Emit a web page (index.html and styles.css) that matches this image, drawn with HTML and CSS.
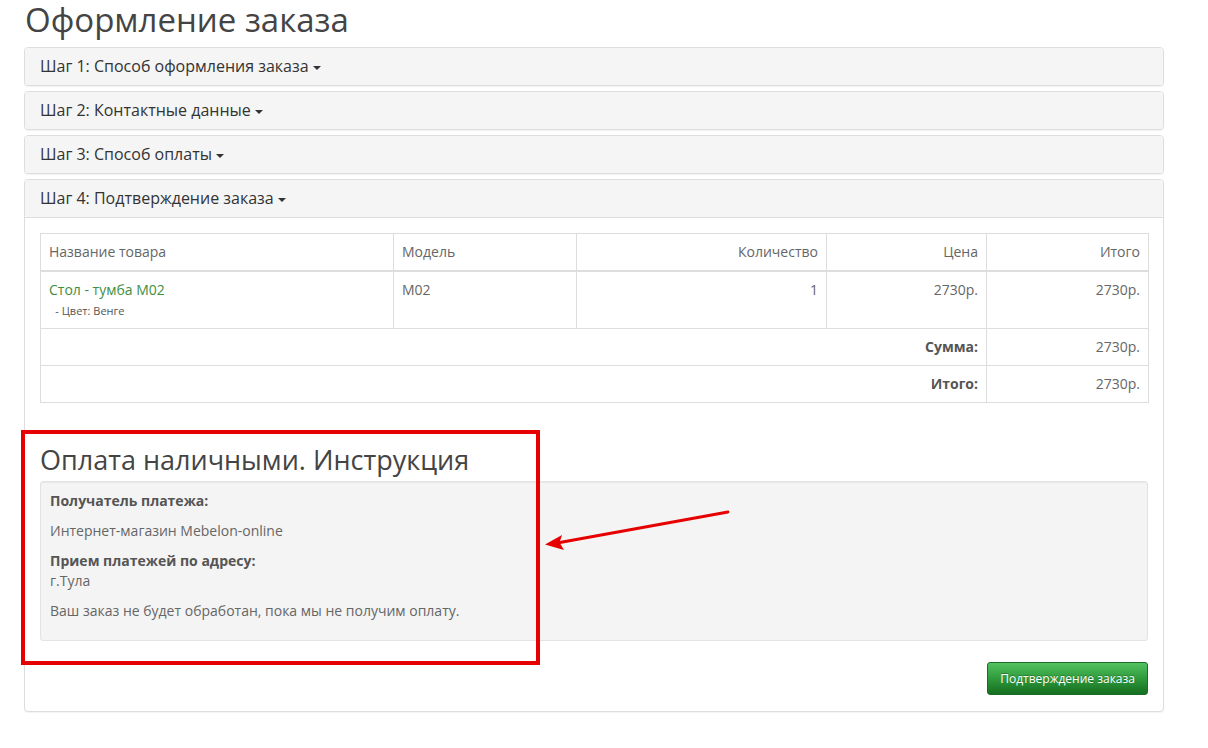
FILE: index.html
```html
<!DOCTYPE html>
<html lang="ru">
<head>
<meta charset="utf-8">
<title>Оформление заказа</title>
<link rel="stylesheet" href="styles.css">
</head>
<body>
<div class="page">
  <h1 class="page-title">Оформление заказа</h1>
  <div class="panel-group">
    <div class="panel">
      <div class="panel-heading">Шаг 1: Способ оформления заказа <span class="caret"></span></div>
    </div>
    <div class="panel">
      <div class="panel-heading">Шаг 2: Контактные данные <span class="caret"></span></div>
    </div>
    <div class="panel">
      <div class="panel-heading">Шаг 3: Способ оплаты <span class="caret"></span></div>
    </div>
    <div class="panel">
      <div class="panel-heading">Шаг 4: Подтверждение заказа <span class="caret"></span></div>
      <div class="panel-body">
        <table class="cart">
          <colgroup>
            <col class="c1"><col class="c2"><col class="c3"><col class="c4"><col class="c5">
          </colgroup>
          <thead>
            <tr>
              <td>Название товара</td>
              <td>Модель</td>
              <td class="r">Количество</td>
              <td class="r">Цена</td>
              <td class="r">Итого</td>
            </tr>
          </thead>
          <tbody>
            <tr class="item">
              <td><a class="prod" href="#">Стол - тумба М02</a><br>&nbsp;<small class="opt"> &nbsp;- Цвет: Венге</small></td>
              <td>М02</td>
              <td class="r">1</td>
              <td class="r">2730р.</td>
              <td class="r">2730р.</td>
            </tr>
          </tbody>
          <tfoot>
            <tr>
              <td colspan="4" class="r"><strong>Сумма:</strong></td>
              <td class="r">2730р.</td>
            </tr>
            <tr>
              <td colspan="4" class="r"><strong>Итого:</strong></td>
              <td class="r">2730р.</td>
            </tr>
          </tfoot>
        </table>
        <h2 class="pay-title">Оплата наличными. Инструкция</h2>
        <div class="well">
          <p><b>Получатель платежа:</b></p>
          <p>Интернет-магазин Mebelon-online</p>
          <p><b>Прием платежей по адресу:</b><br>г.Тула</p>
          <p>Ваш заказ не будет обработан, пока мы не получим оплату.</p>
        </div>
        <div class="buttons">
          <button class="btn-confirm" type="button">Подтверждение заказа</button>
        </div>
      </div>
    </div>
  </div>
</div>
<div class="highlight"></div>
<svg class="arrow" width="200" height="50" viewBox="0 0 200 50" aria-hidden="true">
  <path d="M185 5 L14 36" stroke="#e60000" stroke-width="2.8" fill="none" stroke-linecap="round"/>
  <path d="M2 37.5 L19 28 L16.5 35.5 L21 43 Z" fill="#e60000"/>
</svg>
</body>
</html>
```

FILE: styles.css
```css
* { box-sizing: border-box; }
html, body { margin: 0; padding: 0; background: #fff; }
body {
  font-family: "Open Sans", "Liberation Sans", sans-serif;
  font-size: 14px;
  line-height: 20px;
  color: #666;
  position: relative;
  width: 1208px;
  height: 748px;
  overflow: hidden;
}
.page { padding-left: 24px; width: 1164px; }
.page-title {
  margin: 0 0 7px 0;
  font-size: 33px;
  line-height: 40px;
  font-weight: 400;
  color: #444;
  padding-left: 1px;
}
.panel-group { display: flex; flex-direction: column; gap: 5px; }
.panel {
  border: 1px solid #ddd;
  border-radius: 4px;
  background: #fff;
  box-shadow: 0 1px 1px rgba(0,0,0,.05);
}
.panel-heading {
  background: #f5f5f5;
  padding: 10px 15px;
  font-size: 16px;
  line-height: 17px;
  color: #333;
  border-radius: 3px;
}
.panel-body { border-top: 1px solid #ddd; padding: 15px 15px 16px; }
.caret {
  display: inline-block;
  width: 0; height: 0;
  border-top: 4px solid #333;
  border-left: 4px solid transparent;
  border-right: 4px solid transparent;
  vertical-align: middle;
  margin-left: 0;
}
.cart {
  width: 100%;
  border-collapse: collapse;
  margin-bottom: 20px;
  table-layout: fixed;
}
.c1 { width: 353px; }
.c2 { width: 183px; }
.c3 { width: 250px; }
.c4 { width: 160px; }
.c5 { width: 162px; }
.cart td {
  border: 1px solid #ddd;
  padding: 8px;
  vertical-align: top;
}
.cart thead td { border-bottom-width: 2px; }
.cart .r { text-align: right; }
.cart strong { color: #555; font-weight: 700; }
.prod { color: #3e8e41; text-decoration: none; }
.opt { font-size: 11px; line-height: 19px; color: #555; margin-left: -3px; }
.pay-title {
  margin: 42px 0 6px 0;
  font-size: 27px;
  line-height: 30px;
  font-weight: 400;
  color: #444;
}
.well {
  background: #f4f4f4;
  border: 1px solid #e3e3e3;
  border-radius: 3px;
  padding: 9px;
  margin-bottom: 21px;
  box-shadow: inset 0 1px 1px rgba(0,0,0,.05);
}
.well p { margin: 0 0 10px 0; }
.well b { color: #555; }
.buttons { display: flex; justify-content: flex-end; }
.btn-confirm {
  font-family: "Open Sans", "Liberation Sans", sans-serif;
  font-size: 12px;
  line-height: 17px;
  padding: 7px 12px;
  color: #fff;
  border: 1px solid #1b6d26;
  border-radius: 3px;
  background: linear-gradient(to bottom, #52c160 0%, #2f9a3c 50%, #156e20 100%);
  text-shadow: 0 -1px 0 rgba(0,0,0,.25);
  cursor: pointer;
}
.highlight {
  position: absolute;
  left: 21px;
  top: 430px;
  width: 519px;
  height: 235px;
  border: 4px solid #e60000;
}
.arrow {
  position: absolute;
  left: 543px;
  top: 507px;
}
```
